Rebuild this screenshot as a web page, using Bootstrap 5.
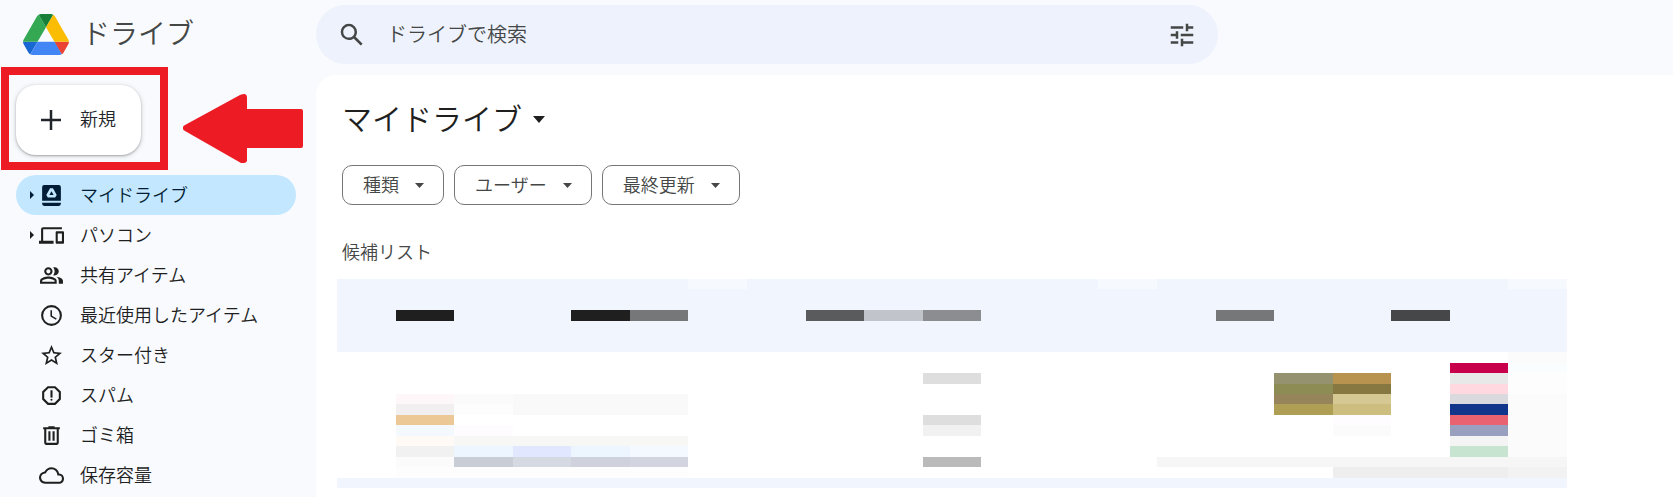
<!DOCTYPE html>
<html lang="ja">
<head>
<meta charset="utf-8">
<meta name="viewport" content="width=device-width, initial-scale=1">
<title>マイドライブ</title>
<link href="https://cdn.jsdelivr.net/npm/bootstrap@5.3.0/dist/css/bootstrap.min.css" rel="stylesheet">
<style>
body { background: #f8fafd; color: #1f1f1f; font-family: "Noto Sans CJK JP", sans-serif; font-weight: 350; font-size: 18px; line-height: 24px; }
svg { display: block; flex: none; fill: currentColor; }
.side-col { width: 316px; flex: none; }
.top-bar { height: 75px; padding-top: 5px; }
.brand { padding-left: 23px; gap: 13px; height: 58px; font-size: 28px; color: #444746; }
.brand span { padding-bottom: 4px; }
.search-box { max-width: 902px; height: 59px; background: #edf2fc; border-radius: 30px; padding: 0 21px; color: #444746; }
.search-box input { font-size: 20px; font-weight: 350; padding: 0 0 2px 20px; height: 40px; color: #444746; }
.search-box input::placeholder { color: #444746; opacity: 1; }
.search-box button { color: inherit; }
.new-area { padding: 10px 0 20px 16px; }
.new-btn { width: 125px; height: 70px; border-radius: 20px; background: #fff; gap: 14px; padding: 0 0 0 20px; font-size: 18px; font-weight: 350; box-shadow: 0 1px 2px rgba(60,64,67,.35), 0 1px 4px 1px rgba(60,64,67,.15); }
.new-btn span { padding-bottom: 3px; }
.mark-frame { left: 1px; top: -8px; width: 167px; height: 103px; border: 8px solid #ed1c24; pointer-events: none; }
.mark-arrow { left: 183px; top: 19px; fill: #ed1c24; }
.side-nav { padding-left: 16px; padding-right: 20px; }
.side-nav .nav-link { height: 40px; padding: 0 0 0 12px; border-radius: 20px; color: #1f1f1f; }
.side-nav .nav-link.active { background: #c2e7ff; color: #001d35; }
.side-nav .twist { width: 7px; margin-right: 4px; }
.side-nav .nav-label { margin-left: 16px; padding-bottom: 3px; }
.main-panel { background: #fff; border-top-left-radius: 20px; padding: 20px 106px 9px 21px; }
.title-btn { gap: 11px; color: #1f1f1f; font-size: 30px; line-height: 44px; font-weight: 350; }
.title-btn svg { margin-top: 4px; }
.chip-row { gap: 10px; padding-top: 26px; }
.chip-btn { height: 40px; border: 1px solid #747775; border-radius: 10px; padding: 0 19px 2px 20px; gap: 16px; font-size: 18px; font-weight: 350; color: #444746; }
.chip-btn svg { margin-top: 3px; }
.pad-l { padding-left: 5px; }
.list-head { font-size: 18px; line-height: 24px; font-weight: 350; color: #444746; margin: 34px 0 16px; }
.mosaic { height: 209px; }
</style>
</head>
<body>
<div class="d-flex flex-column min-vh-100">
  <header class="top-bar d-flex">
    <div class="side-col">
      <a href="#" class="brand d-flex align-items-center text-decoration-none">
        <svg width="46" height="41" viewBox="0 0 87.3 78" aria-hidden="true">
          <path d="m6.6 66.85 3.85 6.65c.8 1.4 1.95 2.5 3.3 3.3l13.75-23.8h-27.5c0 1.55.4 3.1 1.2 4.5z" fill="#1967d2"/>
          <path d="m43.65 25-13.75-23.8c-1.35.8-2.5 1.9-3.3 3.3l-25.4 44a9.06 9.06 0 0 0 -1.2 4.5h27.5z" fill="#34a853"/>
          <path d="m73.55 76.8c1.35-.8 2.5-1.9 3.3-3.3l1.6-2.75 7.65-13.25c.8-1.4 1.2-2.95 1.2-4.5h-27.5l5.85 11.5z" fill="#ea4335"/>
          <path d="m43.65 25 13.75-23.8c-1.35-.8-2.9-1.2-4.5-1.2h-18.5c-1.6 0-3.15.45-4.5 1.2z" fill="#188038"/>
          <path d="m59.8 53h-32.3l-13.75 23.8c1.35.8 2.9 1.2 4.5 1.2h50.8c1.6 0 3.15-.45 4.5-1.2z" fill="#4285f4"/>
          <path d="m73.4 26.5-12.7-22c-.8-1.4-1.95-2.5-3.3-3.3l-13.75 23.8 16.15 28h27.45c0-1.55-.4-3.1-1.2-4.5z" fill="#fbbc04"/>
        </svg>
        <span>ドライブ</span>
      </a>
    </div>
    <form class="search-box d-flex align-items-center flex-grow-1" role="search">
      <button type="button" class="btn p-0 border-0" aria-label="検索">
        <svg width="30" height="30" viewBox="0 0 24 24"><path d="M20.49 19l-5.73-5.73C15.53 12.2 16 10.91 16 9.5A6.5 6.5 0 1 0 9.5 16c1.41 0 2.7-.47 3.77-1.24L19 20.49 20.49 19zM5 9.5C5 7.01 7.01 5 9.5 5S14 7.01 14 9.5 11.99 14 9.5 14 5 11.99 5 9.5z"/></svg>
      </button>
      <input type="text" class="form-control border-0 bg-transparent shadow-none" placeholder="ドライブで検索" aria-label="ドライブで検索">
      <button type="button" class="btn p-0 border-0" aria-label="検索オプション">
        <svg width="30" height="30" viewBox="0 0 24 24"><path d="M3 17v2h6v-2H3zM3 5v2h10V5H3zm10 16v-2h8v-2h-8v-2h-2v6h2zM7 9v2H3v2h4v2h2V9H7zm14 4v-2H11v2h10zm-6-4h2V7h4V5h-4V3h-2v6z"/></svg>
      </button>
    </form>
  </header>

  <div class="d-flex flex-grow-1">
    <aside class="side-col">
      <div class="new-area position-relative">
        <button type="button" class="new-btn btn border-0 d-flex align-items-center">
          <svg width="30" height="30" viewBox="0 0 24 24" aria-hidden="true"><path d="M20 13h-7v7h-2v-7H4v-2h7V4h2v7h7v2z"/></svg>
          <span>新規</span>
        </button>
        <div class="mark-frame position-absolute"></div>
        <svg class="mark-arrow position-absolute" width="120" height="70" viewBox="0 0 120 70" aria-hidden="true"><path d="M0 33Q0 32 2 31L57 1Q59 0 62 0Q64 1 64 3V15H118Q120 15 120 17V52Q120 54 118 54H64V67Q63 69 61 69H58L2 37Q0 36 0 35z"/></svg>
      </div>
      <nav class="side-nav nav flex-column">
        <a href="#" class="nav-link active d-flex align-items-center">
          <svg class="twist" width="7" height="8" viewBox="0 0 7 8"><path d="M2 0l4 4-4 4z"/></svg>
          <svg width="25" height="25" viewBox="0 0 24 24"><path fill-rule="evenodd" d="M5 2h14a2 2 0 0 1 2 2v13H3V4a2 2 0 0 1 2-2zm5.6 3L7 11.4l1.5 2.6h7l1.5-2.6L13.4 5h-2.800zM12 8l2 3.500h-4zM3 19h18v1a2 2 0 0 1-2 2H5a2 2 0 0 1-2-2z"/></svg>
          <span class="nav-label">マイドライブ</span>
        </a>
        <a href="#" class="nav-link d-flex align-items-center">
          <svg class="twist" width="7" height="8" viewBox="0 0 7 8"><path d="M2 0l4 4-4 4z"/></svg>
          <svg width="25" height="25" viewBox="0 0 24 24"><path d="M4 6h18V4H4c-1.100 0-2 .9-2 2v11H0v3h14v-3H4V6zm19 2h-6c-.55 0-1 .45-1 1v10c0 .55.45 1 1 1h6c.55 0 1-.45 1-1V9c0-.55-.45-1-1-1zm-1 9.500h-4V10h4v7.500z"/></svg>
          <span class="nav-label">パソコン</span>
        </a>
        <a href="#" class="nav-link d-flex align-items-center">
          <span class="twist"></span>
          <svg width="25" height="25" viewBox="0 0 24 24"><path d="M9 12c2.210 0 4-1.790 4-4s-1.790-4-4-4-4 1.790-4 4 1.790 4 4 4zm0-6c1.100 0 2 .9 2 2s-.9 2-2 2-2-.9-2-2 .9-2 2-2zM9 13c-2.670 0-8 1.340-8 4v3h16v-3c0-2.660-5.330-4-8-4zm6 5H3v-.99C3.200 16.290 6.300 15 9 15s5.800 1.290 6 2v1zM15 12c2.210 0 4-1.790 4-4s-1.790-4-4-4c-.47 0-.91.1-1.330.240A5.980 5.980 0 0 1 15 8c0 1.430-.52 2.740-1.360 3.760.43.140.88.240 1.360.240zM16.670 13.130C18.040 14.060 19 15.320 19 17v3h4v-3c0-2.180-3.580-3.470-6.330-3.870z"/></svg>
          <span class="nav-label">共有アイテム</span>
        </a>
        <a href="#" class="nav-link d-flex align-items-center">
          <span class="twist"></span>
          <svg width="25" height="25" viewBox="0 0 24 24"><path d="M12 2a10 10 0 1 0 0 20 10 10 0 0 0 0-20zm0 18a8 8 0 1 1 0-16 8 8 0 0 1 0 16zm.5-13H11v6l5.250 3.150.75-1.230-4.500-2.670V7z"/></svg>
          <span class="nav-label">最近使用したアイテム</span>
        </a>
        <a href="#" class="nav-link d-flex align-items-center">
          <span class="twist"></span>
          <svg width="25" height="25" viewBox="0 0 24 24"><path d="M22 9.240l-7.190-.62L12 2 9.190 8.630 2 9.240l5.460 4.730L5.820 21 12 17.270 18.180 21l-1.630-7.030L22 9.240zM12 15.400l-3.760 2.270 1-4.280-3.320-2.880 4.380-.38L12 6.100l1.710 4.040 4.380.38-3.320 2.880 1 4.280L12 15.400z"/></svg>
          <span class="nav-label">スター付き</span>
        </a>
        <a href="#" class="nav-link d-flex align-items-center">
          <span class="twist"></span>
          <svg width="25" height="25" viewBox="0 0 24 24"><path d="M15.730 3H8.270L3 8.270v7.460L8.270 21h7.460L21 15.730V8.270L15.730 3zM19 14.900L14.900 19H9.100L5 14.900V9.100L9.100 5h5.800L19 9.100v5.800z"/><path d="M11 7h2v7h-2z"/><circle cx="12" cy="16" r="1"/></svg>
          <span class="nav-label">スパム</span>
        </a>
        <a href="#" class="nav-link d-flex align-items-center">
          <span class="twist"></span>
          <svg width="25" height="25" viewBox="0 0 24 24"><path d="M15 4V3H9v1H4v2h1v13c0 1.100.9 2 2 2h10c1.100 0 2-.9 2-2V6h1V4h-5zm2 15H7V6h10v13zM9 8h2v9H9zm4 0h2v9h-2z"/></svg>
          <span class="nav-label">ゴミ箱</span>
        </a>
        <a href="#" class="nav-link d-flex align-items-center">
          <span class="twist"></span>
          <svg width="25" height="25" viewBox="0 0 24 24"><path d="M19.350 10.040A7.490 7.490 0 0 0 12 4C9.110 4 6.600 5.640 5.350 8.040A5.994 5.994 0 0 0 0 14c0 3.310 2.690 6 6 6h13c2.760 0 5-2.240 5-5 0-2.640-2.050-4.780-4.650-4.960zM19 18H6c-2.210 0-4-1.790-4-4 0-2.050 1.530-3.760 3.560-3.970l1.070-.11.5-.95A5.469 5.469 0 0 1 12 6c2.620 0 4.880 1.860 5.390 4.430l.3 1.500 1.530.11A2.980 2.980 0 0 1 22 15c0 1.650-1.350 3-3 3z"/></svg>
          <span class="nav-label">保存容量</span>
        </a>
      </nav>
    </aside>

    <main class="main-panel flex-grow-1">
      <div class="pad-l">
        <h1 class="mb-0">
          <button type="button" class="title-btn btn p-0 border-0 d-flex align-items-center">マイドライブ
            <svg width="12" height="7" viewBox="0 0 12 7" aria-hidden="true"><path d="M0 0h12L6 7z"/></svg>
          </button>
        </h1>
        <div class="chip-row d-flex flex-wrap">
          <button type="button" class="chip-btn btn d-flex align-items-center">種類 <svg width="9" height="5" viewBox="0 0 9 5"><path d="M0 0h9L4.500 5z"/></svg></button>
          <button type="button" class="chip-btn btn d-flex align-items-center">ユーザー <svg width="9" height="5" viewBox="0 0 9 5"><path d="M0 0h9L4.500 5z"/></svg></button>
          <button type="button" class="chip-btn btn d-flex align-items-center">最終更新 <svg width="9" height="5" viewBox="0 0 9 5"><path d="M0 0h9L4.500 5z"/></svg></button>
        </div>
        <h2 class="list-head">候補リスト</h2>
      </div>
      <!-- Pixelated file list: 21 columns by 20 rows -->
      <svg class="mosaic w-100" viewBox="0 0 21 20" preserveAspectRatio="none" shape-rendering="crispEdges" role="img" aria-label="ファイルの一覧">
        <path fill="#f1f5fd" d="M0 0h21v7H0zM0 19h21v1H0z"/>
        <path fill="#f6fafe" d="M6 0h1v1H6zM13 0h1v1h-1zM20 0h1v1h-1z"/>
        <path fill="#1f1f1f" d="M1 3h1v1H1zM4 3h1v1H4z"/>
        <path fill="#757779" d="M5 3h1v1H5zM15 3h1v1h-1z"/>
        <path fill="#5a5b5d" d="M8 3h1v1H8z"/>
        <path fill="#c1c4ca" d="M9 3h1v1H9z"/>
        <path fill="#8c8d91" d="M10 3h1v1h-1z"/>
        <path fill="#464749" d="M18 3h1v1h-1z"/>
        <path fill="#fbfbfb" d="M20 7h1v10h-1zM2 11h1v1H2zM17 14h1v1h-1zM1 17h1v1H1z"/>
        <path fill="#fafdfe" d="M20 8h1v1h-1z"/>
        <path fill="#fdfdfd" d="M20 9h1v2h-1zM2 12h1v1H2zM1 18h5v1H1z"/>
        <path fill="#dedede" d="M10 9h1v1h-1zM10 13h1v1h-1z"/>
        <path fill="#f1f1f1" d="M10 14h1v1h-1zM1 16h1v1H1z"/>
        <path fill="#bababa" d="M10 17h1v1h-1z"/>
        <path fill="#fdf7f9" d="M1 11h1v1H1z"/>
        <path fill="#f9f9f9" d="M3 11h3v2H3z"/>
        <path fill="#f1eff0" d="M1 12h1v1H1z"/>
        <path fill="#edc897" d="M1 13h1v1H1z"/>
        <path fill="#f3f9fe" d="M1 14h1v1H1zM5 16h1v1H5z"/>
        <path fill="#fefcff" d="M2 14h1v1H2zM17 13h1v1h-1z"/>
        <path fill="#fffaf6" d="M1 15h1v1H1z"/>
        <path fill="#f7f7f5" d="M2 15h4v1H2z"/>
        <path fill="#edf5ff" d="M2 16h1v1H2zM4 16h1v1H4z"/>
        <path fill="#e1e7ff" d="M3 16h1v1H3z"/>
        <path fill="#c9cdd6" d="M2 17h1v1H2z"/>
        <path fill="#d5d9e1" d="M3 17h1v1H3z"/>
        <path fill="#cfd2dc" d="M4 17h1v1H4z"/>
        <path fill="#d2d5df" d="M5 17h1v1H5z"/>
        <path fill="#959270" d="M16 9h1v1h-1z"/>
        <path fill="#b7934f" d="M17 9h1v1h-1z"/>
        <path fill="#8c8c54" d="M16 10h1v1h-1z"/>
        <path fill="#877741" d="M17 10h1v1h-1z"/>
        <path fill="#96855b" d="M16 11h1v1h-1z"/>
        <path fill="#d6c892" d="M17 11h1v1h-1z"/>
        <path fill="#ae9f54" d="M16 12h1v1h-1z"/>
        <path fill="#cdbe80" d="M17 12h1v1h-1z"/>
        <path fill="#c8004b" d="M19 8h1v1h-1z"/>
        <path fill="#e8e8e8" d="M19 9h1v1h-1z"/>
        <path fill="#ffd9df" d="M19 10h1v1h-1z"/>
        <path fill="#d9d9de" d="M19 11h1v1h-1z"/>
        <path fill="#11358b" d="M19 12h1v1h-1z"/>
        <path fill="#e8636f" d="M19 13h1v1h-1z"/>
        <path fill="#999fbf" d="M19 14h1v1h-1z"/>
        <path fill="#f4f4f4" d="M19 15h1v1h-1z"/>
        <path fill="#c7e4d1" d="M19 16h1v1h-1z"/>
        <path fill="#f6f6f6" d="M14 17h7v1h-7z"/>
        <path fill="#eee" d="M17 18h3v1h-3z"/>
        <path fill="#f2f2f2" d="M20 18h1v1h-1z"/>
      </svg>
    </main>
  </div>
</div>
<script src="https://cdn.jsdelivr.net/npm/bootstrap@5.3.0/dist/js/bootstrap.bundle.min.js"></script>
</body>
</html>
